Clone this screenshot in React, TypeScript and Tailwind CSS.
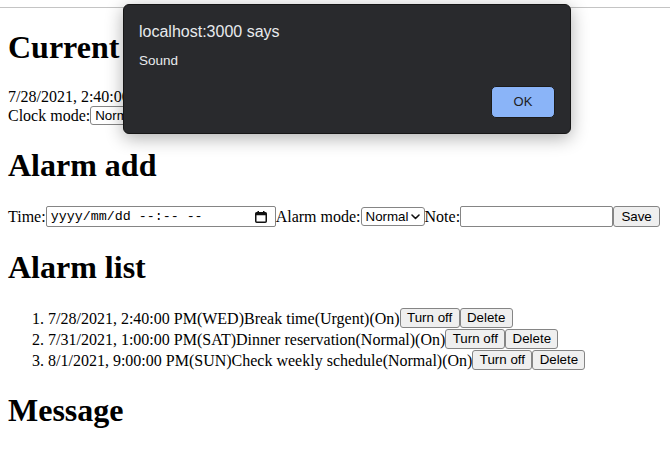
import React from "react"

const alarms = [
  { time: "7/28/2021, 2:40:00 PM", day: "WED", note: "Break time", mode: "Urgent" },
  { time: "7/31/2021, 1:00:00 PM", day: "SAT", note: "Dinner reservation", mode: "Normal" },
  { time: "8/1/2021, 9:00:00 PM", day: "SUN", note: "Check weekly schedule", mode: "Normal" },
]

function Select() {
  return (
    <span className="inline-flex items-center justify-between w-[64px] h-[19px] pl-[4px] pr-[4px] border border-[#858585] rounded-[3px] bg-white font-['Liberation_Sans',Arial,sans-serif] text-[13.33px] leading-none text-black">
      Normal
      <svg width="9" height="6" viewBox="0 0 9 6" fill="none">
        <path d="M1 1l3.5 3.5L8 1" stroke="#111" strokeWidth="1.6" strokeLinecap="round" strokeLinejoin="round" />
      </svg>
    </span>
  )
}

function Btn({ w, children }: { w: string; children: React.ReactNode }) {
  return (
    <button
      className={`inline-flex items-center justify-center h-[20px] ${w} border border-[#858585] rounded-[3px] bg-[#efefef] font-['Liberation_Sans',Arial,sans-serif] text-[13.33px] leading-none text-black`}
    >
      {children}
    </button>
  )
}

function DateInput() {
  return (
    <span className="inline-flex items-center justify-between w-[230px] h-[21px] pl-[4px] pr-[8px] border border-[#858585] rounded-[2px] bg-white font-['Liberation_Mono',monospace] text-[13.33px] leading-none text-black whitespace-pre">
      <span>yyyy/mm/dd --:-- --</span>
      <svg width="12" height="12" viewBox="0 0 12 12" fill="none">
        <rect x="0.75" y="1.75" width="10.5" height="9.5" rx="1" stroke="#111" strokeWidth="1.5" />
        <rect x="0.75" y="1.75" width="10.5" height="2.5" fill="#111" />
        <rect x="2.5" y="0" width="1.5" height="2" fill="#111" />
        <rect x="8" y="0" width="1.5" height="2" fill="#111" />
      </svg>
    </span>
  )
}

function Heading({ children }: { children: React.ReactNode }) {
  return <h1 className="my-[21.44px] text-[32px] leading-[37px] font-bold">{children}</h1>
}

export default function App() {
  return (
    <div className="relative min-h-[453px] overflow-hidden bg-white text-black font-['Liberation_Serif','Times_New_Roman',serif] text-[16px] leading-[18px]">
      <div className="h-[8px] border-b border-[#c4c4c4]" />
      <div className="px-[8px]">
        <Heading>Current time</Heading>
        <div>7/28/2021, 2:40:00 PM(WED)</div>
        <div className="flex items-center h-[20px]">
          Clock mode:
          <Select />
        </div>

        <Heading>Alarm add</Heading>
        <div className="flex items-center h-[22px]">
          Time:
          <DateInput />
          Alarm mode:
          <Select />
          Note:
          <span className="inline-block w-[153px] h-[21px] border border-[#858585] rounded-[2px] bg-white" />
          <Btn w="w-[47px] h-[21px]">Save</Btn>
        </div>

        <Heading>Alarm list</Heading>
        <ol className="list-decimal pl-[40px] my-[16px]">
          {alarms.map((a) => (
            <li key={a.time} className="h-[21px] leading-[21px]">
              <span className="inline-flex items-center h-[21px] align-top">
                {a.time}({a.day}){a.note}({a.mode})(On)
                <Btn w="w-[60px]">Turn off</Btn>
                <Btn w="w-[53px]">Delete</Btn>
              </span>
            </li>
          ))}
        </ol>

        <Heading>Message</Heading>
      </div>

      <div className="absolute left-[123px] top-[4px] w-[448px] h-[130px] rounded-[6px] border border-[#161616] bg-[#292a2d] shadow-[0_4px_18px_rgba(0,0,0,0.32)] font-['Liberation_Sans',Arial,sans-serif]">
        <div className="flex flex-col h-full px-[15px] pt-[18px] pb-[15px]">
          <div className="text-[16px] leading-[18px] text-[#e8eaed]">localhost:3000 says</div>
          <div className="mt-[12px] text-[13.5px] leading-[16px] text-[#e8eaed]">Sound</div>
          <div className="flex justify-end mt-auto">
            <button className="w-[64px] h-[32px] rounded-[5px] border border-[#1b1b1b] bg-[#8ab4f8] text-[13px] text-[#202124]">
              OK
            </button>
          </div>
        </div>
      </div>
    </div>
  )
}
